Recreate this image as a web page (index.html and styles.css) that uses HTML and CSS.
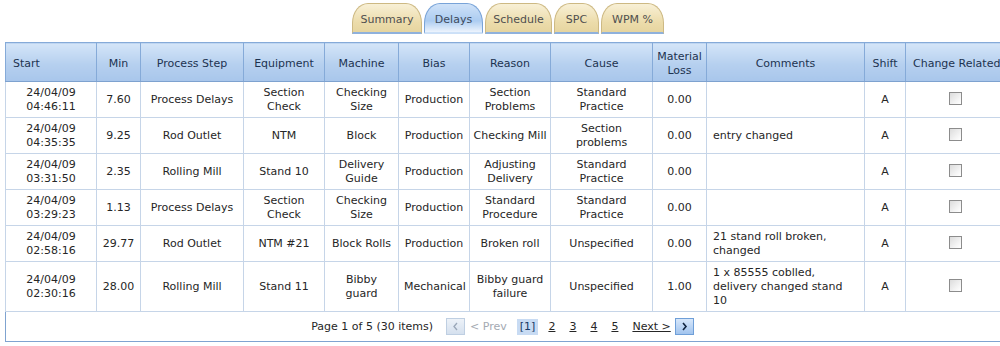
FILE: index.html
```html
<!DOCTYPE html>
<html lang="en">
<head>
    <meta charset="UTF-8">
    <title>Delays</title>
    <link rel="stylesheet" href="styles.css">
</head>
<body>
    <div class="page">
        <div class="tabs">
            <div class="tab">Summary</div>
            <div class="tab active">Delays</div>
            <div class="tab">Schedule</div>
            <div class="tab">SPC</div>
            <div class="tab">WPM %</div>
        </div>

        <table class="grid">
            <colgroup>
                <col style="width:91px">
                <col style="width:44px">
                <col style="width:103px">
                <col style="width:81px">
                <col style="width:74px">
                <col style="width:71px">
                <col style="width:81px">
                <col style="width:102px">
                <col style="width:54px">
                <col style="width:158px">
                <col style="width:41px">
                <col style="width:110px">
            </colgroup>
            <thead>
                <tr>
                    <th class="left">Start</th>
                    <th>Min</th>
                    <th>Process Step</th>
                    <th>Equipment</th>
                    <th>Machine</th>
                    <th>Bias</th>
                    <th>Reason</th>
                    <th>Cause</th>
                    <th>Material Loss</th>
                    <th>Comments</th>
                    <th>Shift</th>
                    <th class="left">Change Related</th>
                </tr>
            </thead>
            <tbody>
                <tr>
                    <td>24/04/09<br>04:46:11</td>
                    <td>7.60</td>
                    <td>Process Delays</td>
                    <td>Section Check</td>
                    <td>Checking Size</td>
                    <td>Production</td>
                    <td>Section Problems</td>
                    <td>Standard Practice</td>
                    <td>0.00</td>
                    <td class="left"></td>
                    <td>A</td>
                    <td class="chk"><span class="box"></span></td>
                </tr>
                <tr>
                    <td>24/04/09<br>04:35:35</td>
                    <td>9.25</td>
                    <td>Rod Outlet</td>
                    <td>NTM</td>
                    <td>Block</td>
                    <td>Production</td>
                    <td class="nw">Checking Mill</td>
                    <td>Section problems</td>
                    <td>0.00</td>
                    <td class="left">entry changed</td>
                    <td>A</td>
                    <td class="chk"><span class="box"></span></td>
                </tr>
                <tr>
                    <td>24/04/09<br>03:31:50</td>
                    <td>2.35</td>
                    <td>Rolling Mill</td>
                    <td>Stand 10</td>
                    <td>Delivery Guide</td>
                    <td>Production</td>
                    <td>Adjusting Delivery</td>
                    <td>Standard Practice</td>
                    <td>0.00</td>
                    <td class="left"></td>
                    <td>A</td>
                    <td class="chk"><span class="box"></span></td>
                </tr>
                <tr>
                    <td>24/04/09<br>03:29:23</td>
                    <td>1.13</td>
                    <td>Process Delays</td>
                    <td>Section Check</td>
                    <td>Checking Size</td>
                    <td>Production</td>
                    <td>Standard Procedure</td>
                    <td>Standard Practice</td>
                    <td>0.00</td>
                    <td class="left"></td>
                    <td>A</td>
                    <td class="chk"><span class="box"></span></td>
                </tr>
                <tr>
                    <td>24/04/09<br>02:58:16</td>
                    <td>29.77</td>
                    <td>Rod Outlet</td>
                    <td>NTM #21</td>
                    <td>Block Rolls</td>
                    <td>Production</td>
                    <td>Broken roll</td>
                    <td>Unspecified</td>
                    <td>0.00</td>
                    <td class="left">21 stand roll broken, changed</td>
                    <td>A</td>
                    <td class="chk"><span class="box"></span></td>
                </tr>
                <tr class="tall">
                    <td>24/04/09<br>02:30:16</td>
                    <td>28.00</td>
                    <td>Rolling Mill</td>
                    <td>Stand 11</td>
                    <td>Bibby guard</td>
                    <td>Mechanical</td>
                    <td>Bibby guard failure</td>
                    <td>Unspecified</td>
                    <td>1.00</td>
                    <td class="left">1 x 85555 coblled, delivery changed stand 10</td>
                    <td>A</td>
                    <td class="chk"><span class="box"></span></td>
                </tr>
            </tbody>
            <tfoot>
                <tr>
                    <td colspan="12">
                        <div class="pager">
                            <span class="summary">Page 1 of 5 (30 items)</span>
                            <span class="btn disabled">
                                <svg width="7" height="9" viewBox="0 0 7 9"><path d="M5 1 L2 4.5 L5 8" fill="none" stroke="#9aa7b8" stroke-width="1.3"/></svg>
                            </span>
                            <span class="prev">&lt; Prev</span>
                            <span class="current">[1]</span>
                            <a class="num">2</a>
                            <a class="num">3</a>
                            <a class="num">4</a>
                            <a class="num">5</a>
                            <a class="next">Next &gt;</a>
                            <span class="btn">
                                <svg width="7" height="9" viewBox="0 0 7 9"><path d="M2 1 L5 4.5 L2 8" fill="none" stroke="#10243f" stroke-width="1.6"/></svg>
                            </span>
                        </div>
                    </td>
                </tr>
            </tfoot>
        </table>
    </div>
</body>
</html>
```

FILE: styles.css
```css
* {
    margin: 0;
    padding: 0;
    box-sizing: border-box;
}

body {
    font-family: "DejaVu Sans", Verdana, sans-serif;
    font-size: 11px;
    color: #262626;
    background: #fff;
    overflow: hidden;
    height: 100vh;
}

.page {
    width: 1010px;
    padding: 3px 0 0 5px;
}

/* Tab strip */
.tabs {
    display: flex;
    gap: 2px;
    padding-left: 347px;
    height: 39px;
    align-items: flex-start;
}

.tab {
    height: 31px;
    padding: 3px 8px 0;
    border: 1px solid #cdb983;
    border-bottom: 2px solid #8fb1dc;
    border-radius: 16px 16px 0 0 / 20px 20px 0 0;
    background: linear-gradient(#f8f0d6, #ecdcab 65%, #e6d5a0);
    color: #4f4f4f;
    display: flex;
    align-items: center;
    justify-content: center;
}

.tab:nth-child(1) { width: 70px; }
.tab:nth-child(2) { width: 59px; }
.tab:nth-child(3) { width: 67px; }
.tab:nth-child(4) { width: 45px; }
.tab:nth-child(5) { width: 63px; }

.tab.active {
    border-color: #78a3d8;
    border-bottom-color: transparent;
    background: linear-gradient(#cfe2f8, #acccf1 60%, #edf4fd);
    color: #3d4a5c;
}

/* Grid */
.grid {
    border-collapse: collapse;
    table-layout: fixed;
    width: 1010px;
    border: 1px solid #7fa3d0;
}

.grid th {
    height: 39px;
    font-weight: normal;
    color: #1d3350;
    background: linear-gradient(#d4e5f8, #b6d0ef 55%, #a8c6eb);
    border: 1px solid #85aad8;
    border-bottom-color: #7ea2cf;
    padding: 3px 4px 0;
    line-height: 14px;
    text-align: center;
}

.grid th.left {
    text-align: left;
    padding-left: 7px;
}

.grid td {
    height: 36px;
    border: 1px solid #c6d5e8;
    text-align: center;
    line-height: 14px;
    padding: 0 5px;
    vertical-align: middle;
}

.grid td.nw {
    white-space: nowrap;
    padding: 0 2px;
}

.grid td.left {
    text-align: left;
    padding: 0 14px 0 6px;
}

.grid tr.tall td {
    height: 50px;
}

.grid td.chk {
    text-align: left;
    padding-left: 43px;
}

.box {
    display: inline-block;
    width: 13px;
    height: 13px;
    border: 1px solid #8c8c8c;
    background: linear-gradient(135deg, #dcdcdc, #f6f6f6 70%, #fff);
    vertical-align: middle;
    margin-top: -2px;
}

/* Pager */
.grid tfoot td {
    height: 30px;
    border: none;
    border-top: 1px solid #c6d5e8;
}

.pager {
    display: flex;
    align-items: center;
    justify-content: center;
    color: #262626;
    margin-left: -16px;
}

.pager .summary {
    margin-right: 13px;
}

.btn {
    width: 19px;
    height: 17px;
    border: 1px solid #6f9fd8;
    background: linear-gradient(#d7e7fa, #a2c4ee);
    display: inline-flex;
    align-items: center;
    justify-content: center;
}

.btn.disabled {
    border-color: #bfcfe2;
    background: linear-gradient(#edf2f8, #d5e0ee);
    margin-right: 5px;
}

.prev {
    color: #a4aab2;
    margin-right: 10px;
}

.current {
    background: #c8dbf3;
    color: #183a66;
    padding: 1px 3px;
    margin-right: 10px;
}

.num, .next {
    color: #262626;
    text-decoration: underline;
}

.num {
    margin-right: 14px;
}

.next {
    margin-right: 4px;
}
```
